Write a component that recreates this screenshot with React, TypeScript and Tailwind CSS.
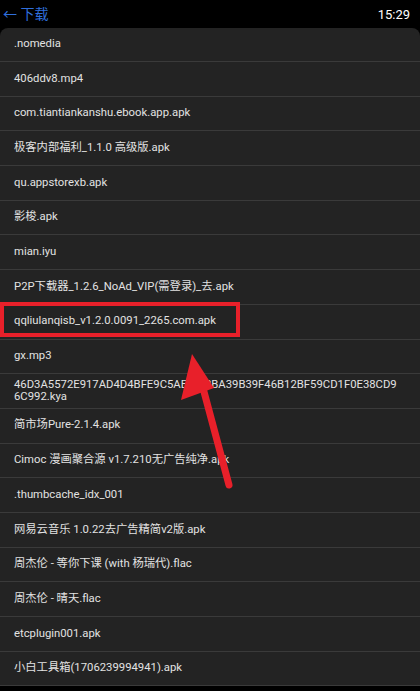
import React from 'react';

const files: Array<string> = [
  '.nomedia',
  '406ddv8.mp4',
  'com.tiantiankanshu.ebook.app.apk',
  '极客内部福利_1.1.0 高级版.apk',
  'qu.appstorexb.apk',
  '影梭.apk',
  'mian.iyu',
  'P2P下载器_1.2.6_NoAd_VIP(需登录)_去.apk',
  'qqliulanqisb_v1.2.0.0091_2265.com.apk',
  'gx.mp3',
  '46D3A5572E917AD4D4BFE9C5AE8_38BA39B39F46B12BF59CD1F0E38CD96C992.kya',
  '简市场Pure-2.1.4.apk',
  'Cimoc 漫画聚合源 v1.7.210无广告纯净.apk',
  '.thumbcache_idx_001',
  '网易云音乐 1.0.22去广告精简v2版.apk',
  '周杰伦 - 等你下课 (with 杨瑞代).flac',
  '周杰伦 - 晴天.flac',
  'etcplugin001.apk',
  '小白工具箱(1706239994941).apk',
];

const HIGHLIGHT = 8;

export default function App() {
  return (
    <div className="relative w-[420px] h-[691px] overflow-hidden bg-black font-['Roboto','Noto_Sans_CJK_SC',sans-serif]">
      <div className="h-[28px] flex items-center justify-between pl-[3px] pr-[10px]">
        <span className="text-[#2f6fdc] text-[14px] leading-none">← 下载</span>
        <span className="text-white text-[13px] leading-none">15:29</span>
      </div>
      <div className="bg-[#232323] rounded-t-[8px]">
        {files.map((name, i) => (
          <div
            key={i}
            className={`relative flex items-center pl-[14px] pr-[18px] border-b border-[#3a3a3a] text-[#e2e2e2] text-[11.3px] leading-[12.5px] break-all ${i === 0 ? 'h-[34px]' : 'h-[34.7px]'}`}
          >
            {name}
            {i === HIGHLIGHT && (
              <div className="absolute left-0 top-[-3px] w-[240px] h-[35px] border-[4px] border-[#e8202a]" />
            )}
          </div>
        ))}
      </div>
      {/* red pointer arrow */}
      <svg className="absolute left-0 top-0 pointer-events-none" width="420" height="691">
        <line x1="203" y1="388" x2="229" y2="485" stroke="#e8202a" strokeWidth="7" strokeLinecap="round" />
        <polygon points="192,354 181,400 214,388" fill="#e8202a" />
      </svg>
    </div>
  );
}
